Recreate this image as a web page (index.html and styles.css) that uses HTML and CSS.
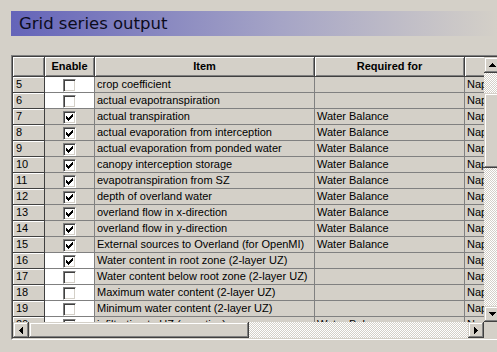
FILE: index.html
```html
<!DOCTYPE html>
<html lang="en">
<head>
    <meta charset="UTF-8">
    <title>Grid series output</title>
    <link rel="stylesheet" href="styles.css">
</head>
<body>

    <div class="title">Grid series output</div>

    <div class="grid">
      <div class="frame">
        <div class="grid-top">
            <div class="cells">
                <div class="row head">
                    <div></div><div>Enable</div><div>Item</div><div>Required for</div><div></div>
                </div>
                <div class="row">
                    <div class="num">5</div>
                    <div class="chk white"><span class="box"></span></div>
                    <div>crop coefficient</div><div></div><div>Nap</div>
                </div>
                <div class="row">
                    <div class="num">6</div>
                    <div class="chk white"><span class="box"></span></div>
                    <div>actual evapotranspiration</div><div></div><div>Nap</div>
                </div>
                <div class="row">
                    <div class="num">7</div>
                    <div class="chk"><span class="box"><svg width="7" height="7"><path d="M6 0h1v3H6v1H5v1H4v1H3v1H2V6H1V5H0V2h1v1h1v1h1V3h1V2h1V1h1z"/></svg></span></div>
                    <div>actual transpiration</div><div>Water Balance</div><div>Nap</div>
                </div>
                <div class="row">
                    <div class="num">8</div>
                    <div class="chk"><span class="box"><svg width="7" height="7"><path d="M6 0h1v3H6v1H5v1H4v1H3v1H2V6H1V5H0V2h1v1h1v1h1V3h1V2h1V1h1z"/></svg></span></div>
                    <div>actual evaporation from interception</div><div>Water Balance</div><div>Nap</div>
                </div>
                <div class="row">
                    <div class="num">9</div>
                    <div class="chk"><span class="box"><svg width="7" height="7"><path d="M6 0h1v3H6v1H5v1H4v1H3v1H2V6H1V5H0V2h1v1h1v1h1V3h1V2h1V1h1z"/></svg></span></div>
                    <div>actual evaporation from ponded water</div><div>Water Balance</div><div>Nap</div>
                </div>
                <div class="row">
                    <div class="num">10</div>
                    <div class="chk"><span class="box"><svg width="7" height="7"><path d="M6 0h1v3H6v1H5v1H4v1H3v1H2V6H1V5H0V2h1v1h1v1h1V3h1V2h1V1h1z"/></svg></span></div>
                    <div>canopy interception storage</div><div>Water Balance</div><div>Nap</div>
                </div>
                <div class="row">
                    <div class="num">11</div>
                    <div class="chk"><span class="box"><svg width="7" height="7"><path d="M6 0h1v3H6v1H5v1H4v1H3v1H2V6H1V5H0V2h1v1h1v1h1V3h1V2h1V1h1z"/></svg></span></div>
                    <div>evapotranspiration from SZ</div><div>Water Balance</div><div>Nap</div>
                </div>
                <div class="row">
                    <div class="num">12</div>
                    <div class="chk"><span class="box"><svg width="7" height="7"><path d="M6 0h1v3H6v1H5v1H4v1H3v1H2V6H1V5H0V2h1v1h1v1h1V3h1V2h1V1h1z"/></svg></span></div>
                    <div>depth of overland water</div><div>Water Balance</div><div>Nap</div>
                </div>
                <div class="row">
                    <div class="num">13</div>
                    <div class="chk"><span class="box"><svg width="7" height="7"><path d="M6 0h1v3H6v1H5v1H4v1H3v1H2V6H1V5H0V2h1v1h1v1h1V3h1V2h1V1h1z"/></svg></span></div>
                    <div>overland flow in x-direction</div><div>Water Balance</div><div>Nap</div>
                </div>
                <div class="row">
                    <div class="num">14</div>
                    <div class="chk"><span class="box"><svg width="7" height="7"><path d="M6 0h1v3H6v1H5v1H4v1H3v1H2V6H1V5H0V2h1v1h1v1h1V3h1V2h1V1h1z"/></svg></span></div>
                    <div>overland flow in y-direction</div><div>Water Balance</div><div>Nap</div>
                </div>
                <div class="row">
                    <div class="num">15</div>
                    <div class="chk"><span class="box"><svg width="7" height="7"><path d="M6 0h1v3H6v1H5v1H4v1H3v1H2V6H1V5H0V2h1v1h1v1h1V3h1V2h1V1h1z"/></svg></span></div>
                    <div>External sources to Overland (for OpenMI)</div><div>Water Balance</div><div>Nap</div>
                </div>
                <div class="row">
                    <div class="num">16</div>
                    <div class="chk white"><span class="box"><svg width="7" height="7"><path d="M6 0h1v3H6v1H5v1H4v1H3v1H2V6H1V5H0V2h1v1h1v1h1V3h1V2h1V1h1z"/></svg></span></div>
                    <div>Water content in root zone (2-layer UZ)</div><div></div><div>Nap</div>
                </div>
                <div class="row">
                    <div class="num">17</div>
                    <div class="chk white"><span class="box"></span></div>
                    <div>Water content below root zone (2-layer UZ)</div><div></div><div>Nap</div>
                </div>
                <div class="row">
                    <div class="num">18</div>
                    <div class="chk white"><span class="box"></span></div>
                    <div>Maximum water content (2-layer UZ)</div><div></div><div>Nap</div>
                </div>
                <div class="row">
                    <div class="num">19</div>
                    <div class="chk white"><span class="box"></span></div>
                    <div>Minimum water content (2-layer UZ)</div><div></div><div>Nap</div>
                </div>
                <div class="row">
                    <div class="num">20</div>
                    <div class="chk white"><span class="box"><svg width="7" height="7"><path d="M6 0h1v3H6v1H5v1H4v1H3v1H2V6H1V5H0V2h1v1h1v1h1V3h1V2h1V1h1z"/></svg></span></div>
                    <div>infiltration to UZ (negative)</div><div>Water Balance</div><div>Nap</div>
                </div>
            </div>

            <!-- vertical scrollbar -->
            <div class="vscroll">
                <div class="btn"><svg width="7" height="4"><path d="M3 0h1v1h1v1h1v1h1v1H0V3h1V2h1V1h1z"/></svg></div>
                <div class="track top"></div>
                <div class="thumb"></div>
                <div class="track grow"></div>
                <div class="btn"><svg width="7" height="4"><path d="M0 0h7v1H6v1H5v1H4v1H3V3H2V2H1V1H0z"/></svg></div>
            </div>
        </div>

        <div class="grid-bottom">
            <div class="hscroll">
                <div class="btn"><svg width="4" height="7"><path d="M4 0v7H3V6H2V5H1V4H0V3h1V2h1V1h1V0z"/></svg></div>
                <div class="thumb"></div>
                <div class="track grow"></div>
                <div class="btn"><svg width="4" height="7"><path d="M0 0h1v1h1v1h1v1h1v1H3v1H2v1H1v1H0z"/></svg></div>
            </div>
            <div class="corner"></div>
        </div>
      </div>
    </div>

</body>
</html>
```

FILE: styles.css
```css
body { margin: 0; background: #d4d0c8; overflow: hidden; font-family: "Liberation Sans", Arial, sans-serif; font-size: 11px; color: #000; }

.title {
    margin: 11px 0 0 11px;
    height: 25px;
    padding-left: 8px;
    line-height: 25px;
    font-family: "DejaVu Sans", Verdana, sans-serif;
    font-size: 16.5px;
    color: #0c0c1c;
    white-space: nowrap;
    background: linear-gradient(to right, #6464b9, #a5a4c6 55%, #d4d0c8);
}

/* sunken grid frame */
.grid { margin: 19px 0 0 11px; width: 489px; border: 1px solid; border-color: #808080 #fff #fff #808080; }
.frame { border: 1px solid; border-color: #404040 #d4d0c8 #d4d0c8 #404040; }
.grid-top { display: flex; height: 265px; }
.cells { width: 471px; overflow: hidden; flex: none; }
.grid-bottom { display: flex; height: 16px; }
.corner { width: 16px; }

.row { display: grid; grid-template-columns: 32px 50px 220px 150px 100px; height: 16px; }
.row > div {
    border-right: 1px solid #808080;
    border-bottom: 1px solid #808080;
    padding-left: 2px;
    line-height: 15px;
    white-space: nowrap;
    overflow: hidden;
    background: #d4d0c8;
}
.head { height: 20px; }
.head > div {
    line-height: 18px;
    font-weight: bold;
    text-align: center;
    padding-left: 0;
    border-right-color: #404040;
    border-bottom-color: #404040;
    box-shadow: inset 1px 1px #fff, inset -1px -1px #808080;
}
.row > .num {
    padding-left: 3px;
    border-right-color: #404040;
    border-bottom-color: #404040;
    box-shadow: inset 1px 1px #fff;
}
.row > .chk { padding-left: 0; }
.row > .white { background: #fff; }

.box {
    display: block;
    width: 13px;
    height: 13px;
    box-sizing: border-box;
    margin: 2px auto 0;
    background: #fff;
    border: 1px solid;
    border-color: #808080 #fff #fff #808080;
    box-shadow: inset 1px 1px #404040, inset -1px -1px #d4d0c8;
}
.box svg { display: block; margin: 2px; }

/* scrollbars */
.vscroll { width: 16px; display: flex; flex-direction: column; }
.hscroll { width: 471px; display: flex; }
.btn, .thumb {
    flex: none;
    background: #d4d0c8;
    box-shadow: inset -1px -1px #404040, inset 1px 1px #d4d0c8, inset -2px -2px #808080, inset 2px 2px #fff;
}
.btn { width: 16px; height: 16px; display: flex; align-items: center; justify-content: center; }
.track { flex: none; background: repeating-conic-gradient(#fff 0 25%, #d4d0c8 0 50%) 0 0 / 2px 2px; }
.grow { flex: 1; }
.vscroll .top { height: 20px; }
.vscroll .thumb { height: 75px; }
.hscroll .thumb { width: 220px; }
```
